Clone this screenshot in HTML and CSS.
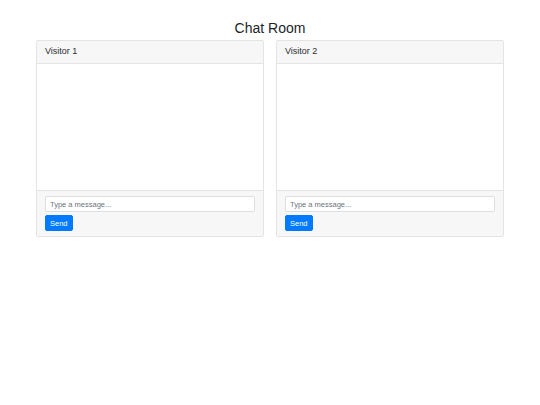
FILE: index.html
```html
<!DOCTYPE html>
<html lang="en">
<head>
<meta charset="UTF-8">
<meta name="viewport" content="width=device-width, initial-scale=1.0">
<title>Chat Room</title>
<link rel="stylesheet" href="styles.css">
</head>
<body>
<div class="chat-wrap">
  <h3 class="chat-title">Chat Room</h3>
  <div class="chat-grid">
    <!-- visitor 1 -->
    <div class="chat-card">
      <div class="chat-head">Visitor 1</div>
      <div class="chat-body"></div>
      <div class="chat-foot">
        <input type="text" class="msg-input" placeholder="Type a message...">
        <button class="send-btn">Send</button>
      </div>
    </div>
    <!-- visitor 2 -->
    <div class="chat-card">
      <div class="chat-head">Visitor 2</div>
      <div class="chat-body"></div>
      <div class="chat-foot">
        <input type="text" class="msg-input" placeholder="Type a message...">
        <button class="send-btn">Send</button>
      </div>
    </div>
  </div>
</div>
</body>
</html>
```

FILE: styles.css
```css
body {
  margin: 0;
  background: #fff;
  font-family: 'Liberation Sans', Arial, sans-serif;
  color: #212529;
}
.chat-wrap {
  width: 468px;
  margin: 0 auto;
  padding-top: 20px;
}
.chat-title {
  margin: 0 0 3px 0;
  font-size: 14px;
  line-height: 17px;
  font-weight: 400;
  text-align: center;
}
.chat-grid {
  display: grid;
  grid-template-columns: 1fr 1fr;
  gap: 12px;
}
.chat-card {
  display: flex;
  flex-direction: column;
  border: 1px solid #e4e4e4;
  border-radius: 2px;
  background: #fff;
}
.chat-head {
  font-size: 9px;
  line-height: 13px;
  padding: 4px 8px 5px 8px;
  background: #f7f7f7;
  border-bottom: 1px solid #e4e4e4;
  color: #2a2d31;
}
.chat-body {
  height: 126px;
}
.chat-foot {
  display: flex;
  flex-direction: column;
  align-items: flex-start;
  gap: 3px;
  padding: 5px 8px 5px 8px;
  background: #f7f7f7;
  border-top: 1px solid #e4e4e4;
}
.msg-input {
  box-sizing: border-box;
  width: 100%;
  height: 16px;
  margin: 0;
  padding: 0 4px;
  font-family: inherit;
  font-size: 7.5px;
  color: #495057;
  background: #fff;
  border: 1px solid #dcdfe3;
  border-radius: 2px;
  outline: none;
}
.msg-input::placeholder { color: #6c757d; }
.send-btn {
  box-sizing: border-box;
  height: 16px;
  margin: 0;
  padding: 0 4px;
  font-family: inherit;
  font-size: 7.5px;
  color: #fff;
  background: #007bff;
  border: 1px solid #007bff;
  border-radius: 2px;
  cursor: pointer;
}
```
